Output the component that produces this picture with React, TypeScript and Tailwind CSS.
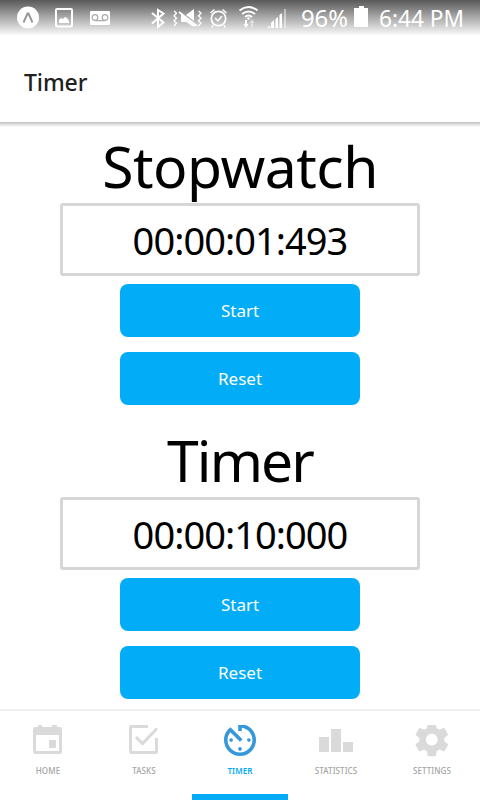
import React from "react";

function StatusBar() {
  return (
    <div className="flex h-9 w-full bg-linear-to-b from-[#595959] via-[#a5a5a5] via-45% to-white">
      <svg width="480" height="36" viewBox="0 0 480 36" fill="none" stroke="white">
        <circle cx="28" cy="17.5" r="11" fill="white" stroke="none" />
        <path d="M23.5 22.5 27.5 13.500h1l4 9" stroke="#999" strokeWidth="2" />
        <rect x="56" y="9" width="16" height="17.5" rx="1" strokeWidth="2" />
        <path d="M59 23v-3l2-2 2 1 2-2 2 1 2 3v2z" fill="white" stroke="none" />
        <rect x="90" y="11" width="20" height="14" rx="1" fill="white" stroke="none" />
        <g stroke="#aaa" strokeWidth="1.2">
          <circle cx="95" cy="17.5" r="2.8" />
          <circle cx="105" cy="17.5" r="2.8" />
          <path d="M95 20.7h10" />
        </g>
        <path d="m152 13 11.500 9.500-5.500 4.500V10l5.500 3.500-11.500 10" strokeWidth="2" />
        <path d="m174 11 2.500 2-2.500 3 2.500 2-2.500 3 2.500 2-2.500 3M198.500 11l2.500 2-2.500 3 2.500 2-2.500 3 2.500 2-2.500 3" strokeWidth="1.3" />
        <path d="M194 9v12l-8-6zM181 14l14 11.500-1 1.500-8-5h-5z" fill="white" stroke="none" />
        <path d="m179 12 18 14" strokeWidth="1.7" />
        <circle cx="218.500" cy="18.500" r="7.200" strokeWidth="1.7" />
        <path d="m215 18 3 3 4-5M210.500 13l4-3.500M226.500 13l-4-3.500M213 25l-1 2.500M224 25l1 2.500" strokeWidth="1.500" />
        <path d="M239.500 10.500q9-7 18 0M242 14q6.500-5 13 0M245 17q3.500-3 7 0" strokeWidth="1.900" />
        <circle cx="248.500" cy="18.500" r="1.300" fill="white" stroke="none" />
        <path d="M245 20h2v4h1.500l-2.500 4-2.500-4h1.500z" fill="white" stroke="none" />
        <path d="M251 27v-4h-1.500l2.500-4 2.500 4h-1.500v4z" fill="white" opacity=".5" stroke="none" />
        <path d="M267 28l3-2v2zM271 28v-5l3-3v8zM275.500 28v-9l2.500-2v11zM279.500 28V15l2.500-2v15z" fill="white" stroke="none" />
        <path d="M285 28V9" strokeWidth="2" opacity=".45" />
        <path d="M359 6h5v2h4v19h-14V8h5z" fill="white" stroke="none" />
        <text x="301" y="27" textLength="47" lengthAdjust="spacingAndGlyphs" fill="white" stroke="none" className="font-['Noto_Sans',sans-serif] text-[23px]">96%</text>
        <text x="379" y="27" textLength="85" lengthAdjust="spacingAndGlyphs" fill="white" stroke="none" className="font-['Noto_Sans',sans-serif] text-[23px]">6:44 PM</text>
      </svg>
    </div>
  );
}

function Button({ label }: { label: string }) {
  return (
    <button className="h-[53px] w-60 rounded-lg bg-[#03acf6] text-center text-[17px] leading-[53px] text-white">
      {label}
    </button>
  );
}

function Section({ title, time, titleClass }: { title: string; time: string; titleClass: string }) {
  return (
    <section className="flex h-[294px] flex-col items-center">
      <h2 className={`h-[76px] shrink-0 whitespace-nowrap text-[57px] leading-[78px] text-black ${titleClass}`}>{title}</h2>
      <div className="h-[73px] w-[360px] shrink-0 rounded-[3px] border-3 border-[#d6d6d6] text-center text-[38px] leading-[68px] tracking-[-0.95px] text-black">
        {time}
      </div>
      <div className="mt-2 flex flex-col gap-[15px]">
        <Button label="Start" />
        <Button label="Reset" />
      </div>
    </section>
  );
}

function Tab({ label, active = false, children }: { label: string; active?: boolean; children: React.ReactNode }) {
  return (
    <div className="flex w-24 flex-col items-center pt-[14px]">
      <svg width="40" height="32" viewBox="0 0 40 32" fill={active ? "#3498db" : "#dadada"}>{children}</svg>
      <span className={`mt-[7px] h-[13px] text-[8px] leading-[13px] tracking-[0.1px] ${active ? "font-semibold text-[#03acf6]" : "font-medium text-[#a4a4a4]"}`}>{label}</span>
      <div className={`mt-auto h-1.5 w-full ${active ? "bg-[#03acf6]" : ""}`} />
    </div>
  );
}

export default function App() {
  return (
    <div className="flex h-[800px] w-[480px] flex-col overflow-hidden bg-white font-['Noto_Sans',sans-serif]">
      <header className="h-[122px] shrink-0 bg-white">
        <StatusBar />
        <h1 className="pt-[29px] pl-6 text-[23px] leading-[34px] font-medium tracking-[-0.1px] text-[#212121]">Timer</h1>
      </header>
      <div className="h-[5px] shrink-0 bg-linear-to-b from-[#c2c2c2] to-white" />
      <main className="h-[582px] shrink-0 overflow-hidden">
        <Section title="Stopwatch" time="00:00:01:493" titleClass="tracking-[-0.5px]" />
        <Section title="Timer" time="00:00:10:000" titleClass="tracking-[-1.9px]" />
      </main>
      <nav className="flex h-[91px] shrink-0 border-t-2 border-[#efefef]">
        <Tab label="HOME">
          <path fillRule="evenodd" d="M7 2h3V0h4v2h10V0h5v2h3q2 0 2 2v23q0 2-2 2H7q-2 0-2-2V4q0-2 2-2zm1 8v16h23V10zm13 5h7v8h-7z" />
        </Tab>
        <Tab label="TASKS">
          <path d="M7 0h17v3H8v23h23V13h3v14q0 2-2 2H7q-2 0-2-2V2q0-2 2-2z" />
          <path d="m12 12 6.500 6.500L33 3.500" fill="none" stroke="#dadada" strokeWidth="3" />
        </Tab>
        <Tab label="TIMER" active>
          <path transform="translate(-1.333 -6.333) scale(1.778)" d="M11 17c0 .55.45 1 1 1s1-.45 1-1-.45-1-1-1-1 .45-1 1zm0-14v4h2V5.080c3.390.490 6 3.390 6 6.920 0 3.870-3.130 7-7 7s-7-3.130-7-7c0-1.680.590-3.220 1.580-4.420L12 13l1.410-1.410-6.800-6.800v.020C4.420 6.450 3 9.050 3 12c0 4.970 4.020 9 9 9 4.970 0 9-4.030 9-9s-4.030-9-9-9h-1zm7 9c0-.550-.450-1-1-1s-1 .450-1 1 .450 1 1 1 1-.450 1-1zM6 12c0 .550.450 1 1 1s1-.450 1-1-.450-1-1-1-1 .450-1 1z" />
        </Tab>
        <Tab label="STATISTICS">
          <path d="M3 12h10v15H3zM15 4h10v23H15zM27 17h10v10H27z" />
        </Tab>
        <Tab label="SETTINGS">
          <path transform="translate(-.2 -5.3) scale(1.667)" d="M19.430 12.980c.040-.320.070-.640.070-.980s-.030-.660-.070-.980l2.110-1.650c.190-.150.240-.420.120-.640l-2-3.460c-.120-.220-.390-.300-.610-.220l-2.490 1c-.520-.400-1.080-.730-1.690-.980l-.380-2.650C14.460 2.180 14.250 2 14 2h-4c-.250 0-.460.180-.490.420l-.380 2.650c-.610.250-1.170.590-1.690.980l-2.490-1c-.230-.090-.490 0-.610.220l-2 3.460c-.130.220-.070.490.120.640l2.110 1.650c-.040.320-.070.650-.070.980s.030.660.070.980l-2.110 1.650c-.190.150-.240.420-.120.640l2 3.460c.120.220.390.300.610.220l2.490-1c.520.400 1.080.730 1.690.980l.380 2.650c.030.240.240.420.490.420h4c.250 0 .460-.180.490-.420l.380-2.650c.610-.250 1.170-.590 1.690-.980l2.490 1c.230.090.490 0 .610-.220l2-3.460c.120-.220.070-.490-.120-.640l-2.110-1.650zM12 15.500c-1.930 0-3.500-1.570-3.500-3.500s1.570-3.500 3.500-3.500 3.500 1.570 3.500 3.500-1.570 3.500-3.500 3.500z" />
        </Tab>
      </nav>
    </div>
  );
}
